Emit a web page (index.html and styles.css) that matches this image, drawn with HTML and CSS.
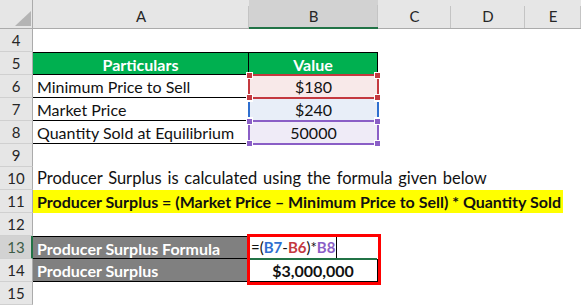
FILE: index.html
```html
<!DOCTYPE html>
<html>
<head>
<meta charset="utf-8">
<link rel="stylesheet" href="styles.css">
</head>
<body>
<div class="sheet">
  <div class="corner"><span class="tri"></span></div>
  <div class="ch">A</div>
  <div class="ch sel">B</div>
  <div class="ch">C</div>
  <div class="ch">D</div>
  <div class="ch">E</div>

  <div class="rh">4</div>
  <div class="c rest-all"></div>

  <div class="rh">5</div>
  <div class="c hdr a5">Particulars</div>
  <div class="c hdr b5">Value</div>
  <div class="c rest"></div>

  <div class="rh">6</div>
  <div class="c la">Minimum Price to Sell</div>
  <div class="c val fill-red">$180<span class="ref ref-red"><i class="h tl"></i><i class="h tr"></i><i class="h bl"></i><i class="h br"></i></span></div>
  <div class="c rest"></div>

  <div class="rh">7</div>
  <div class="c la">Market Price</div>
  <div class="c val fill-blue">$240<span class="ref ref-blue"><i class="h tl"></i><i class="h tr"></i><i class="h bl"></i><i class="h br"></i></span></div>
  <div class="c rest"></div>

  <div class="rh">8</div>
  <div class="c la">Quantity Sold at Equilibrium</div>
  <div class="c val fill-purple">50000<span class="ref ref-purple"><i class="h tl"></i><i class="h tr"></i><i class="h bl"></i><i class="h br"></i></span></div>
  <div class="c rest"></div>

  <div class="rh">9</div>
  <div class="c rest-all"></div>

  <div class="rh">10</div>
  <div class="c rest-all txt">Producer Surplus is calculated using the formula given below</div>

  <div class="rh">11</div>
  <div class="c rest-all"><div class="yellow">Producer Surplus = (Market Price – Minimum Price to Sell) * Quantity Sold</div></div>

  <div class="rh">12</div>
  <div class="c rest-all"></div>

  <div class="rh rsel">13</div>
  <div class="c dark d13">Producer Surplus Formula</div>
  <div class="c formula"><span>=(</span><span class="r-blue">B7</span><span>-</span><span class="r-red">B6</span><span>)*</span><span class="r-purple">B8</span><span class="caret"></span><span class="redbox"></span><span class="active"></span></div>
  <div class="c rest"></div>

  <div class="rh">14</div>
  <div class="c dark d14">Producer Surplus</div>
  <div class="c result">$3,000,000</div>
  <div class="c rest"></div>

  <div class="rh">15</div>
  <div class="c rest-all"></div>
</div>
</body>
</html>
```

FILE: styles.css
```css
html, body {
  margin: 0;
  padding: 0;
  background: #ffffff;
  overflow: hidden;
}

.sheet {
  display: grid;
  grid-template-columns: 33px 216px 129px 73px 74px 56px;
  grid-template-rows: 29px repeat(12, 23px);
  width: 581px;
  height: 305px;
  font-family: Lato, "Open Sans", sans-serif;
  font-size: 16px;
  line-height: 23px;
  color: #111;
}

.corner {
  background: #e6e6e6;
  border-right: 1px solid #ababab;
  border-bottom: 1px solid #ababab;
  box-sizing: border-box;
  display: flex;
  justify-content: flex-end;
  align-items: flex-end;
  padding: 0 1px 2px 0;
}

.tri {
  width: 16px;
  height: 15px;
  background: #b4b4b4;
  clip-path: polygon(100% 0, 100% 100%, 0 100%);
}

.ch {
  background: linear-gradient(#c4c4c4, #c4c4c4) right bottom / 1px 22px no-repeat, #e6e6e6;
  border-bottom: 1px solid #ababab;
  box-sizing: border-box;
  display: flex;
  justify-content: center;
  align-items: flex-end;
  color: #262626;
  font-size: 15px;
}

.ch.sel {
  background: linear-gradient(#c4c4c4, #c4c4c4) right bottom / 1px 22px no-repeat, #d2d2d2;
  border-bottom: 2px solid #217346;
  line-height: 22px;
}

.rh {
  background: #e6e6e6;
  border-right: 1px solid #ababab;
  border-bottom: 1px solid #d0d0d0;
  box-sizing: border-box;
  text-align: center;
  color: #262626;
  font-size: 15px;
  line-height: 22px;
}

.rh.rsel {
  background: #d2d2d2;
  border-right: 2px solid #217346;
  color: #3d5c47;
  padding-left: 1px;
}

.c {
  box-sizing: border-box;
  white-space: nowrap;
  min-width: 0;
}

.rest-all {
  grid-column: 2 / 7;
}

.rest {
  grid-column: 4 / 7;
}

.hdr {
  background: #00b050;
  color: #ffffff;
  font-weight: 700;
  text-align: center;
  border-top: 1px solid #000;
  border-bottom: 1px solid #000;
}

.a5 {
  border-right: 1px solid #000;
}

.b5 {
  border-right: 1px solid #000;
}

.la {
  padding-left: 4px;
  border-bottom: 1px solid #000;
}

.txt {
  padding-left: 4px;
  font-size: 16.5px;
  word-spacing: 1.6px;
}

.val {
  position: relative;
  text-align: center;
}

.fill-red { background: #f8e9e9; }
.fill-blue { background: #e8eef8; }
.fill-purple { background: #efebf7; }

.ref {
  position: absolute;
  top: -1px;
  left: -1px;
  right: -1px;
  bottom: -1px;
  border: 2px solid;
  z-index: 2;
}

.ref-red { border-color: #c4393f; color: #c4393f; z-index: 3; }
.ref-blue { border-color: #2f6fcf; color: #2f6fcf; z-index: 1; }
.ref-purple { border-color: #8a5ec6; color: #8a5ec6; z-index: 3; }

.h {
  position: absolute;
  width: 5px;
  height: 5px;
  background: currentColor;
  border: 1px solid #fff;
}

.h.tl { top: -4px; left: -4px; }
.h.tr { top: -4px; right: -4px; }
.h.bl { bottom: -4px; left: -4px; }
.h.br { bottom: -4px; right: -4px; }

.yellow {
  width: 530px;
  height: 23px;
  background: #ffff00;
  font-weight: 700;
  padding-left: 4px;
  box-sizing: border-box;
}

.dark {
  background: #808080;
  color: #ffffff;
  font-weight: 700;
  padding-left: 4px;
  border-bottom: 1px solid #000;
}

.d13 {
  border-top: 1px solid #000;
}

.formula {
  position: relative;
  padding-left: 2px;
  font-size: 15px;
}

.formula span {
  font-weight: 400;
}

.formula .r-blue { color: #2f6fcf; font-weight: 700; }
.formula .r-red { color: #c4393f; font-weight: 700; }
.formula .r-purple { color: #8a5ec6; font-weight: 700; }

.formula .caret {
  display: inline-block;
  width: 1px;
  height: 21px;
  background: #000;
  vertical-align: top;
  margin-top: 1px;
  margin-left: 1px;
}

.formula .redbox {
  position: absolute;
  top: -2px;
  left: -2px;
  width: 134px;
  height: 51px;
  border: 3px solid #ff0000;
  box-sizing: border-box;
  z-index: 4;
}

.formula .active {
  position: absolute;
  left: 1px;
  right: 1px;
  bottom: -1px;
  height: 2px;
  background: #217346;
  z-index: 5;
}

.result {
  text-align: center;
  font-weight: 700;
  border-right: 1px solid #000;
  border-bottom: 1px solid #000;
}
```
